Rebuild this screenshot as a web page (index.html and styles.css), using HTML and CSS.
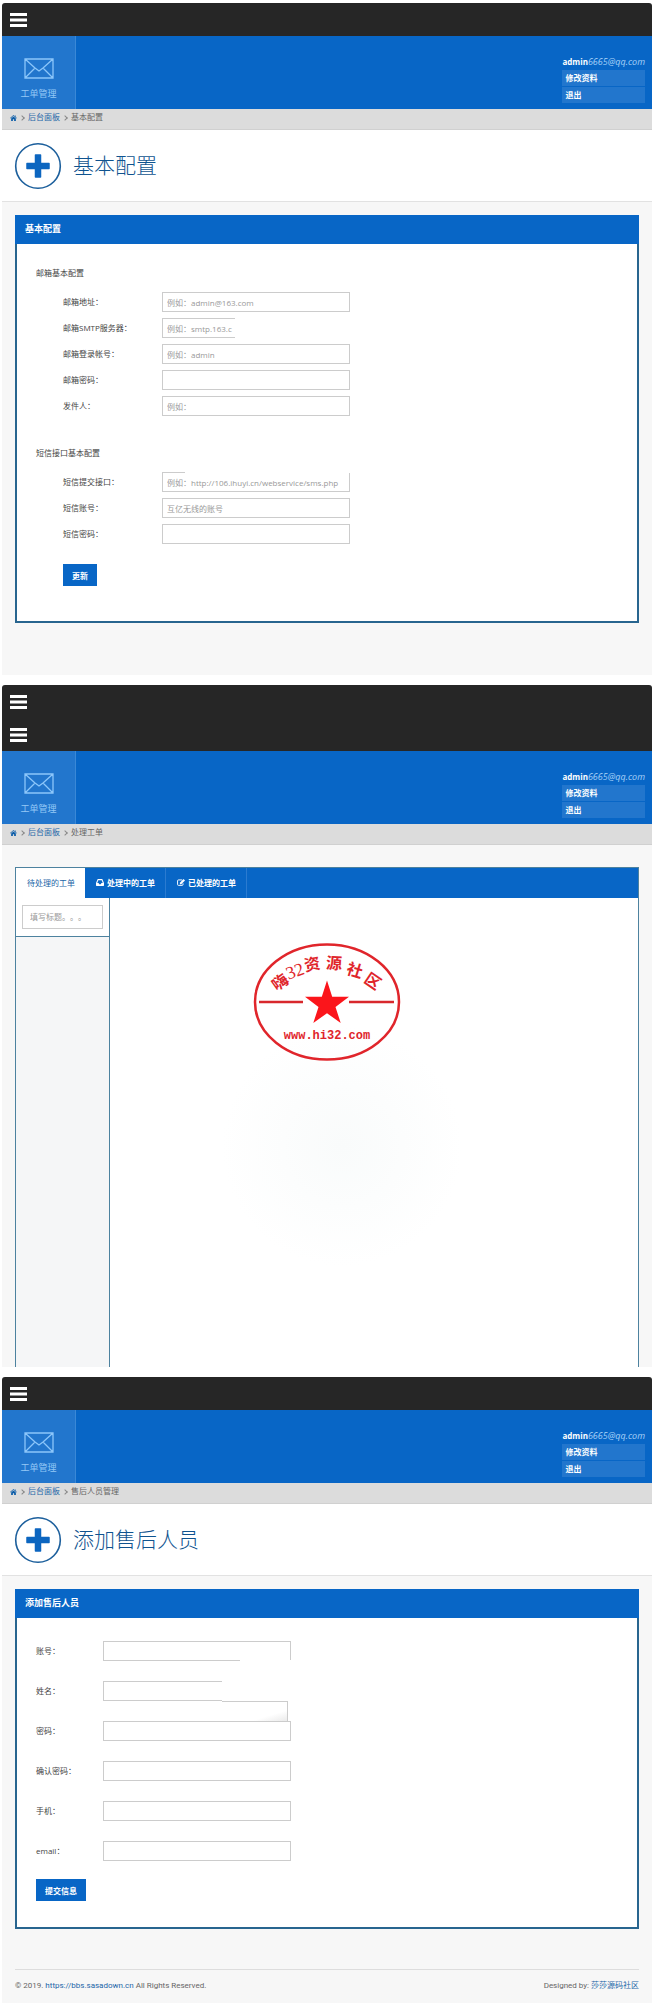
FILE: index.html
```
<!DOCTYPE html>
<html lang="zh-CN">
<head>
    <meta charset="UTF-8">
    <meta name="viewport" content="width=device-width, initial-scale=1.0">
    <title>工单管理</title>
    <link rel="stylesheet" href="styles.css">
</head>
<body>
    <!-- Shared icons -->
    <svg class="sprite" aria-hidden="true">
        <symbol id="i-bars" viewBox="0 0 17 14"><path d="M0 0h17v3H0zM0 5.5h17v3H0zM0 11h17v3H0z" fill="#fff"/></symbol>
        <symbol id="i-mail" viewBox="0 0 30 21"><path d="M1 1h28v19H1zM1 1l10 9 4 3 4-3L29 1M1 20l10-10M29 20L19 10" fill="none" stroke="#8cc6fa" stroke-width="1.3"/></symbol>
        <symbol id="i-home" viewBox="0 0 16 14"><path d="M8 0L0 7l1 1 7-6 7 6 1-1-3-2.600V1h-2v1.700zM8 3.300L2.500 8v6h4v-4h3v4h4V8z" fill="#0a5ca8"/></symbol>
        <symbol id="i-plus" viewBox="0 0 48 48"><circle cx="24" cy="24" r="22.300" fill="none" stroke="#1c5f9c" stroke-width="1.600"/><path d="M21.500 13h5v8.500H35v5h-8.500V35h-5v-8.500H13v-5h8.500z" fill="#0c66c0" stroke="#0c66c0" stroke-width="1.500" stroke-linejoin="round"/></symbol>
        <symbol id="i-inbox" viewBox="0 0 14 12"><path d="M3 0h8l3 7v4q0 1-1 1H1q-1 0-1-1V7zM4 2L2.200 7H4.500l1 2h3l1-2h2.300L10 2z" fill="#fff" fill-rule="evenodd"/></symbol>
        <symbol id="i-edit" viewBox="0 0 14 12"><path d="M9 1.500H2.500Q1 1.500 1 3v6.500Q1 11 2.500 11H9q1.500 0 1.500-1.500V7.500" fill="none" stroke="#fff" stroke-width="1.700"/><path d="M11.500 0L14 2.500 7.500 9H5V6.500z" fill="#fff"/></symbol>
    </svg>

    <!-- Basic configuration -->
    <section class="screen">
        <div class="topbar"><button type="button" class="menu-btn" aria-label="菜单"><svg><use href="#i-bars"/></svg></button></div>
        <header class="header">
            <a href="#" class="module"><svg><use href="#i-mail"/></svg>工单管理</a>
            <div class="user">
                <p><b>admin</b><em>6665@qq.com</em></p>
                <a href="#">修改资料</a>
                <a href="#">退出</a>
            </div>
        </header>
        <nav class="crumbs"><a href="#" aria-label="首页"><svg><use href="#i-home"/></svg></a><i></i><a href="#">后台面板</a><i></i><span>基本配置</span></nav>
        <div class="page-title">
            <svg><use href="#i-plus"/></svg>
            <h1>基本配置</h1>
        </div>
        <div class="panel">
            <h2>基本配置</h2>
            <form class="config-form">
                <h3>邮箱基本配置</h3>
                <div class="fields">
                    <div class="field"><label for="mail">邮箱地址：</label><input type="text" id="mail" placeholder="例如：admin@163.com"></div>
                    <div class="field open-end"><label for="smtp">邮箱SMTP服务器：</label><input type="text" id="smtp" placeholder="例如：smtp.163.c"></div>
                    <div class="field"><label for="login">邮箱登录帐号：</label><input type="text" id="login" placeholder="例如：admin"></div>
                    <div class="field"><label for="mail-pass">邮箱密码：</label><input type="password" id="mail-pass"></div>
                    <div class="field"><label for="sender">发件人：</label><input type="text" id="sender" placeholder="例如："></div>
                </div>
                <h3>短信接口基本配置</h3>
                <div class="fields">
                    <div class="field open-top"><label for="sms-url">短信提交接口：</label><input type="text" id="sms-url" placeholder="例如：http://106.ihuyi.cn/webservice/sms.php"></div>
                    <div class="field"><label for="sms-user">短信账号：</label><input type="text" id="sms-user" placeholder="互亿无线的账号"></div>
                    <div class="field"><label for="sms-pass">短信密码：</label><input type="password" id="sms-pass"></div>
                </div>
                <button type="submit" class="btn">更新</button>
            </form>
        </div>
    </section>

    <!-- Ticket handling -->
    <section class="screen">
        <div class="topbar"><button type="button" class="menu-btn" aria-label="菜单"><svg><use href="#i-bars"/></svg></button></div>
        <div class="topbar square"><button type="button" class="menu-btn" aria-label="菜单"><svg><use href="#i-bars"/></svg></button></div>
        <header class="header">
            <a href="#" class="module"><svg><use href="#i-mail"/></svg>工单管理</a>
            <div class="user">
                <p><b>admin</b><em>6665@qq.com</em></p>
                <a href="#">修改资料</a>
                <a href="#">退出</a>
            </div>
        </header>
        <nav class="crumbs"><a href="#" aria-label="首页"><svg><use href="#i-home"/></svg></a><i></i><a href="#">后台面板</a><i></i><span>处理工单</span></nav>
        <div class="tickets">
            <div class="tabs">
                <button type="button" class="active">待处理的工单</button>
                <button type="button"><svg><use href="#i-inbox"/></svg>处理中的工单</button>
                <button type="button"><svg><use href="#i-edit"/></svg>已处理的工单</button>
            </div>
            <div class="workspace">
                <aside>
                    <div class="search"><input type="text" aria-label="填写标题" placeholder="填写标题。。。"></div>
                </aside>
                <div class="detail"></div>
            </div>
        </div>
        <svg class="stamp" viewBox="0 0 148 120">
            <ellipse cx="74" cy="60" rx="72" ry="57.500" fill="none" stroke="#e0252b" stroke-width="2.500"/>
            <path d="M6 60h44M96 60h45" stroke="#d8282c" stroke-width="2.500"/>
            <path d="M74 38.500l5.200 16.200H96L82.500 65l5.200 16L74 71.200 60.300 81l5.200-16L52 54.700h16.800z" fill="#fb151b"/>
            <g class="stamp-name">
                <text transform="translate(27 40) rotate(-36)" y="6">嗨</text>
                <text transform="translate(42 29) rotate(-20)" y="6" class="stamp-num">32</text>
                <text transform="translate(59 22) rotate(-10)" y="6">资</text>
                <text transform="translate(81 21) rotate(3)" y="6">源</text>
                <text transform="translate(102 28) rotate(17)" y="6">社</text>
                <text transform="translate(120 39) rotate(34)" y="6">区</text>
            </g>
            <text x="74" y="97" class="stamp-url">www.hi32.com</text>
        </svg>
    </section>

    <!-- Add support staff -->
    <section class="screen">
        <div class="topbar"><button type="button" class="menu-btn" aria-label="菜单"><svg><use href="#i-bars"/></svg></button></div>
        <header class="header">
            <a href="#" class="module"><svg><use href="#i-mail"/></svg>工单管理</a>
            <div class="user">
                <p><b>admin</b><em>6665@qq.com</em></p>
                <a href="#">修改资料</a>
                <a href="#">退出</a>
            </div>
        </header>
        <nav class="crumbs"><a href="#" aria-label="首页"><svg><use href="#i-home"/></svg></a><i></i><a href="#">后台面板</a><i></i><span>售后人员管理</span></nav>
        <div class="page-title">
            <svg><use href="#i-plus"/></svg>
            <h1>添加售后人员</h1>
        </div>
        <div class="panel">
            <h2>添加售后人员</h2>
            <form class="staff-form">
                <div class="fields">
                    <div class="field open-bottom"><label for="account">账号：</label><input type="text" id="account"></div>
                    <div class="field half"><label for="name">姓名：</label><input type="text" id="name"></div>
                    <div class="field"><label for="pass">密码：</label><input type="password" id="pass"></div>
                    <div class="field"><label for="pass2">确认密码：</label><input type="password" id="pass2"></div>
                    <div class="field"><label for="phone">手机：</label><input type="tel" id="phone"></div>
                    <div class="field"><label for="email">email：</label><input type="email" id="email"></div>
                </div>
                <button type="submit" class="btn">提交信息</button>
            </form>
        </div>
        <footer class="footer">
            <p>© 2019. <a href="#">https://bbs.sasadown.cn</a> All Rights Reserved.</p>
            <p>Designed by: <a href="#">莎莎源码社区</a></p>
        </footer>
    </section>
</body>
</html>
```
FILE: styles.css
```
/* Reset and Base Styles */
* {
    margin: 0;
    padding: 0;
    box-sizing: border-box;
}

body {
    background: #fff;
    color: #444;
    font-family: Roboto, "Noto Sans CJK SC", sans-serif;
    font-size: 8px;
    line-height: 12px;
    padding: 3px 2px 0;
    text-spacing-trim: space-all;
}

a {
    color: #1c66a8;
    text-decoration: none;
}

button, input {
    font-family: inherit;
}

button {
    border: none;
    cursor: pointer;
}

.sprite {
    display: none;
}

.screen {
    position: relative;
    margin-bottom: 10px;
    padding-bottom: 52px;
    background: #f7f7f7;
    border-radius: 3px 3px 0 0;
}

.screen:nth-of-type(2),
.screen:last-of-type {
    padding-bottom: 0;
}

.screen:last-of-type {
    margin-bottom: 0;
}

/* Top bar and header */
.topbar {
    display: flex;
    align-items: center;
    height: 33px;
    padding-left: 8px;
    background: #262626;
    border-radius: 3px 3px 0 0;
}

.topbar.square {
    border-radius: 0;
}

.menu-btn {
    background: none;
}

.menu-btn svg {
    display: block;
    width: 17px;
    height: 14px;
}

.header {
    display: flex;
    justify-content: space-between;
    height: 73px;
    background: #0866c6;
}

.module {
    display: flex;
    flex-direction: column;
    align-items: center;
    gap: 9px;
    width: 74px;
    padding-top: 22px;
    background: #2276cd;
    border-right: 1px solid #3a88d6;
    color: #94c8f6;
    font-size: 9px;
}

.module svg {
    width: 30px;
    height: 21px;
}

.user {
    padding: 20px 7px 0 0;
    color: #fff;
    font-family: "Open Sans", "Noto Sans CJK SC", sans-serif;
}

.user p {
    margin-bottom: 2px;
}

.user em {
    color: #a9d2f8;
    font-size: 9px;
}

.user a {
    display: block;
    margin-bottom: 1px;
    padding: 2px 3px;
    background: #2276cd;
    color: #fff;
    font-weight: bold;
}

/* Breadcrumbs */
.crumbs {
    display: flex;
    align-items: center;
    height: 21px;
    padding: 0 8px 2px;
    background: #dcdcdc;
    border-bottom: 1px solid #d0d0d0;
    color: #666;
}

.crumbs svg {
    display: block;
    width: 7px;
    height: 6px;
}

.crumbs i {
    width: 4px;
    height: 4px;
    margin: 0 4px 0 3px;
    border: solid #888;
    border-width: 1px 1px 0 0;
    transform: rotate(45deg);
}

/* Page title */
.page-title {
    display: flex;
    align-items: center;
    gap: 11px;
    height: 72px;
    padding-left: 12px;
    background: #fff;
    border-bottom: 1px solid #e2e2e2;
}

.page-title svg {
    width: 48px;
    height: 48px;
}

.page-title h1 {
    color: #0f538f;
    font-size: 21px;
    font-weight: 300;
    line-height: 24px;
}

/* Panels and forms */
.panel {
    margin: 13px 13px 0;
    background: #fff;
    border: 2px solid #28658f;
    border-top: none;
}

.panel h2 {
    margin: 0 -2px;
    padding: 0 10px;
    background: #0866c6;
    color: #fff;
    font-size: 9px;
    line-height: 29px;
}

.config-form {
    padding: 24px 19px 35px;
}

.config-form h3 {
    margin-bottom: 12px;
    font-size: 8px;
    font-weight: normal;
}

.config-form .fields {
    display: grid;
    gap: 6px;
    margin-left: 27px;
}

.config-form .fields + h3 {
    margin-top: 32px;
}

.config-form .btn {
    margin: 20px 0 0 27px;
}

.field {
    position: relative;
    display: flex;
    align-items: center;
    font-family: "Open Sans", "Noto Sans CJK SC", sans-serif;
}

.field label {
    width: 99px;
}

.field input {
    width: 188px;
    height: 20px;
    padding: 0 4px;
    border: 1px solid #ccc;
    font-size: 8px;
}

input::placeholder {
    color: #999;
}

.staff-form {
    padding: 23px 19px 26px;
}

.staff-form .fields {
    display: grid;
    gap: 20px;
}

.staff-form label {
    width: 67px;
}

.staff-form .btn {
    margin-top: 18px;
}

.btn {
    display: block;
    height: 22px;
    padding: 0 9px;
    background: #0866c6;
    color: #fff;
    font-size: 8px;
    font-weight: bold;
}

/* White patches over the input borders */
.field::after {
    position: absolute;
    background: #fff;
}

.open-end::after {
    content: "";
    top: 0;
    left: 172px;
    width: 116px;
    height: 20px;
}

.open-top::after {
    content: "";
    top: 0;
    left: 122px;
    width: 165px;
    height: 1px;
}

.open-bottom::after {
    content: "";
    top: 19px;
    left: 204px;
    width: 51px;
    height: 1px;
}

.half::after {
    content: "";
    top: 0;
    left: 186px;
    width: 70px;
    height: 20px;
}

/* leftover box below the name field */
.half::before {
    content: "";
    position: absolute;
    top: 20px;
    left: 186px;
    width: 65px;
    height: 20px;
    border: solid #ccc;
    border-width: 1px 1px 0 0;
    background: linear-gradient(to top left, #e8e8e8, #fff 30%);
}

/* Ticket tabs */
.tickets {
    margin: 22px 13px 0;
    border: 1px solid #4d829f;
    border-bottom: none;
    background: #fff;
}

.tabs {
    display: flex;
    height: 30px;
    background: #0866c6;
}

.tabs button {
    display: flex;
    align-items: center;
    gap: 3px;
    padding: 0 10px 2px 11px;
    background: none;
    border-right: 1px solid #2b7bd0;
    color: #fff;
    font-size: 8px;
    font-weight: bold;
}

.tabs .active {
    background: #fff;
    border: none;
    color: #1c66a8;
    font-weight: normal;
}

.tabs svg {
    width: 8px;
    height: 7px;
}

.workspace {
    display: flex;
    min-height: 469px;
}

.workspace aside {
    width: 94px;
    background: #f5f6f7;
    border-right: 1px solid #4d829f;
}

.search {
    padding: 7px 6px;
    background: #fff;
    border-bottom: 1px solid #4d829f;
}

.search input {
    display: block;
    width: 100%;
    height: 24px;
    padding: 0 7px;
    border: 1px solid #ccc;
    font-size: 8px;
}

.detail {
    flex: 1;
    background: radial-gradient(circle at 44% 53%, #f9fbfb, #fff 120px);
}

/* Stamp */
.stamp {
    position: absolute;
    top: 257px;
    left: 50%;
    width: 148px;
    height: 120px;
    margin-left: -74px;
}

.stamp text {
    fill: #e0252b;
    text-anchor: middle;
}

.stamp-name {
    font-size: 16px;
    font-weight: bold;
}

.stamp .stamp-num {
    font-family: "Liberation Serif", serif;
    font-size: 18px;
    font-weight: normal;
}

.stamp-url {
    font-family: "Liberation Mono", monospace;
    font-size: 12px;
    font-weight: bold;
}

/* Footer */
.footer {
    display: flex;
    justify-content: space-between;
    margin: 40px 13px 0;
    padding: 10px 0 11px;
    border-top: 1px solid #ddd;
    color: #666;
}
```
